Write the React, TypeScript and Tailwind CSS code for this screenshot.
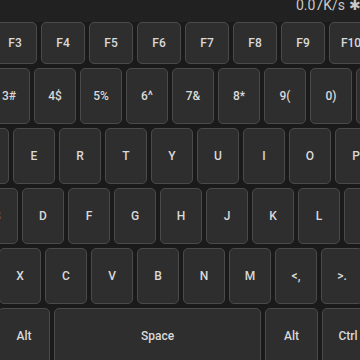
import type { ReactNode } from 'react'

const font = { fontFamily: 'Roboto, "Liberation Sans", sans-serif' }

const Key = ({ label, w, h }: { label: ReactNode; w: string; h: string }) => (
  <div
    className={`${w} ${h} shrink-0 flex items-center justify-center rounded-[5px] border border-[#4a4a4a] bg-[#2e2e2e] text-[12px] font-medium text-[#d9d9d9]`}
  >
    {label}
  </div>
)

const fKeys = ['F3', 'F4', 'F5', 'F6', 'F7', 'F8', 'F9', 'F10']
const numKeys = ['3#', '4$', '5%', '6^', '7&', '8*', '9(', '0)', '-_']
const qRow = ['W', 'E', 'R', 'T', 'Y', 'U', 'I', 'O', 'P']
const aRow = ['S', 'D', 'F', 'G', 'H', 'J', 'K', 'L', ';:']
const zRow = ['X', 'C', 'V', 'B', 'N', 'M', '<,', '>.']

const App = () => {
  return (
    <div
      className="relative h-[360px] w-[360px] overflow-hidden bg-[#1a1a1a]"
      style={font}
    >
      <header className="flex h-[22px] items-start justify-end gap-[4px] bg-[#212121]">
        <span className="-mt-[2px] text-[14px] leading-[15px] text-[#c8c8c8]">
          0.07K/s
        </span>
        <span
          className="-mt-[2px] w-[11px] shrink-0 whitespace-nowrap text-[14px] leading-[15px] text-[#c8c8c8]"
          style={{ fontFamily: '"DejaVu Sans", sans-serif' }}
        >
          ✱
        </span>
      </header>
      <div className="flex flex-col gap-1">
        <div className="-ml-[7px] flex gap-1">
          {fKeys.map((k) => (
            <Key key={k} label={k} w="w-[44px]" h="h-[42px]" />
          ))}
        </div>
        <div className="-ml-[12px] flex gap-1">
          {numKeys.map((k) => (
            <Key key={k} label={k} w="w-[42px]" h="h-[56px]" />
          ))}
        </div>
        <div className="-ml-[33px] flex gap-1">
          {qRow.map((k) => (
            <Key key={k} label={k} w="w-[42px]" h="h-[56px]" />
          ))}
        </div>
        <div className="-ml-[24px] flex gap-1">
          {aRow.map((k) => (
            <Key key={k} label={k} w="w-[42px]" h="h-[56px]" />
          ))}
        </div>
        <div className="-ml-[1px] flex gap-1">
          {zRow.map((k) => (
            <Key key={k} label={k} w="w-[42px]" h="h-[56px]" />
          ))}
        </div>
        <div className="-ml-[2px] flex gap-1">
          <Key label="Alt" w="w-[52px]" h="h-[56px]" />
          <Key label="Space" w="w-[207px]" h="h-[56px]" />
          <Key label="Alt" w="w-[53px]" h="h-[56px]" />
          <Key label="Ctrl" w="w-[52px]" h="h-[56px]" />
        </div>
      </div>
    </div>
  )
}

export default App
